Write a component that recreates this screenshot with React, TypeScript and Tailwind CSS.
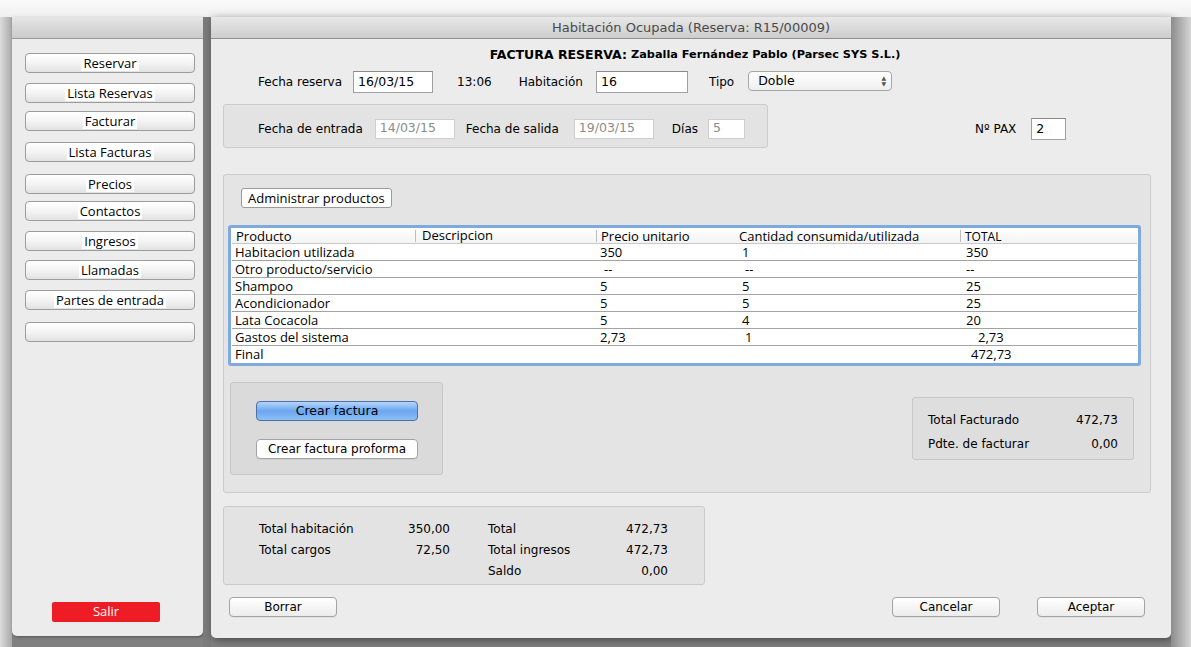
import React from 'react';

const mac = "font-['DejaVu_Sans',sans-serif] text-[12px] text-black";
const win = "font-['Open_Sans',sans-serif] text-[13px] text-black";

const sideButtons: { label: string; top: number }[] = [
    { label: 'Reservar', top: 14 },
    { label: 'Lista Reservas', top: 10 },
    { label: 'Facturar', top: 8 },
    { label: 'Lista Facturas', top: 11 },
    { label: 'Precios', top: 12 },
    { label: 'Contactos', top: 7 },
    { label: 'Ingresos', top: 10 },
    { label: 'Llamadas', top: 9 },
    { label: 'Partes de entrada', top: 10 },
    { label: '', top: 12 },
];

type Row = { p: string; pr: string; c: string; t: string; prOff?: number; cOff?: number; tOff?: number };

const rows: Row[] = [
    { p: 'Habitacion utilizada', pr: '350', c: '1', t: '350' },
    { p: 'Otro producto/servicio', pr: '--', c: '--', t: '--', prOff: 4, cOff: 3 },
    { p: 'Shampoo', pr: '5', c: '5', t: '25' },
    { p: 'Acondicionador', pr: '5', c: '5', t: '25' },
    { p: 'Lata Cocacola', pr: '5', c: '4', t: '20' },
    { p: 'Gastos del sistema', pr: '2,73', c: '1', t: '2,73', cOff: 3, tOff: 12 },
    { p: 'Final', pr: '', c: '', t: '472,73', tOff: 5 },
];

const MacButton = ({ label, className = '' }: { label: string; className?: string }) => (
    <button className={`h-[20px] rounded-[4px] border border-[#a3a3a3] bg-gradient-to-b from-white to-[#ececec] ${mac} shadow-[0_1px_0_rgba(0,0,0,0.05)] ${className}`}>
        {label}
    </button>
);

const Field = ({ value, w, h = 22, disabled = false }: { value: string; w: number; h?: number; disabled?: boolean }) => (
    <div
        className={`flex items-center px-[4px] bg-white border ${disabled ? 'border-[#cfcfcf] text-[#8c8c8c]' : 'border-[#9f9f9f] border-t-[#8a8a8a] text-black'} font-['DejaVu_Sans',sans-serif] text-[12.5px]`}
        style={{ width: w, height: h }}
    >
        {value}
    </div>
);

export default function App() {
    return (
        <div className="w-[1191px] h-[647px] overflow-hidden bg-[#808080] flex flex-col">
            {/* desktop strip */}
            <div className="h-[17px] shrink-0 bg-gradient-to-b from-[#fbfbfb] to-[#efefef]" />

            <div className="flex flex-1">
                <div className="w-[12px] shrink-0 bg-gradient-to-r from-[#dcdcdc] to-[#a9a9a9]" />

                {/* Side menu window */}
                <div className="w-[191px] h-[619px] shrink-0 flex flex-col bg-[#ececec] rounded-b-[5px] shadow-[1px_1px_3px_rgba(0,0,0,0.35)]">
                    <div className="h-[22px] shrink-0 bg-gradient-to-b from-[#e6e6e6] to-[#cbcbcb] border-b border-[#9a9a9a]" />
                    <div className="flex flex-col pl-[13px] pr-[8px]">
                        {sideButtons.map((b, i) => (
                            <button
                                key={i}
                                style={{ marginTop: b.top }}
                                className={`h-[20px] w-[170px] rounded-[4px] border border-[#9c9c9c] bg-gradient-to-b from-white via-[#f4f4f4] to-[#e2e2e2] ${win} text-[13.5px] flex items-center justify-center`}
                            >
                                {b.label && <span className="bg-white px-[2px] leading-[16px]">{b.label}</span>}
                            </button>
                        ))}
                    </div>
                    <div className="flex-1" />
                    <div className="flex pl-[40px] pb-[14px]">
                        <button className="h-[20px] w-[108px] rounded-[2px] bg-[#ee1c25] text-white font-['Open_Sans',sans-serif] text-[13px]">
                            Salir
                        </button>
                    </div>
                </div>

                <div className="w-[8px] shrink-0 bg-[#7b7b7b]" />

                {/* Main window */}
                <div className={`w-[960px] h-[621px] shrink-0 flex flex-col bg-[#ececec] rounded-b-[5px] shadow-[2px_2px_8px_rgba(0,0,0,0.45)] ${mac}`}>
                    <div className="h-[22px] shrink-0 bg-gradient-to-b from-[#e8e8e8] to-[#cdcdcd] border-b border-[#8f8f8f] flex items-center justify-center text-[13px] text-[#4a4a4a]">
                        Habitación Ocupada (Reserva: R15/00009)
                    </div>

                    <div className="mt-[8px] h-[16px] flex items-center justify-center font-bold pl-[8px]">
                        <span className="text-[12.5px]">FACTURA RESERVA:</span>
                        <span className="ml-[4px] text-[11.3px]">Zaballa Fernández Pablo (Parsec SYS S.L.)</span>
                    </div>

                    {/* Row 1 */}
                    <div className="mt-[8px] h-[22px] flex items-center pl-[47px]">
                        <span>Fecha reserva</span>
                        <div className="ml-[11px]"><Field value="16/03/15" w={80} /></div>
                        <span className="ml-[24px]">13:06</span>
                        <span className="ml-[27px]">Habitación</span>
                        <div className="ml-[13px]"><Field value="16" w={92} /></div>
                        <span className="ml-[21px]">Tipo</span>
                        <div className="ml-[14px] w-[144px] h-[20px] -mt-[2px] rounded-[4px] border border-[#a6a6a6] bg-gradient-to-b from-white to-[#efefef] flex items-center pl-[9px] pr-[5px]">
                            <span className="flex-1 text-[12.5px]">Doble</span>
                            <span className="flex flex-col text-[6px] leading-[6px] text-[#555]">
                                <span>▲</span>
                                <span>▼</span>
                            </span>
                        </div>
                    </div>

                    {/* Row 2 */}
                    <div className="mt-[11px] flex items-center pl-[12px]">
                        <div className="w-[545px] h-[44px] rounded-[3px] border border-[#cbcbcb] bg-[#e3e3e3] flex items-center pl-[34px] pt-[5px]">
                            <span>Fecha de entrada</span>
                            <div className="ml-[12px]"><Field value="14/03/15" w={80} h={20} disabled /></div>
                            <span className="ml-[11px]">Fecha de salida</span>
                            <div className="ml-[15px]"><Field value="19/03/15" w={80} h={20} disabled /></div>
                            <span className="ml-[18px]">Días</span>
                            <div className="ml-[10px]"><Field value="5" w={37} h={20} disabled /></div>
                        </div>
                        <div className="flex items-center mt-[6px]">
                            <span className="ml-[207px]">Nº PAX</span>
                            <div className="ml-[15px]"><Field value="2" w={35} /></div>
                        </div>
                    </div>

                    {/* Products group */}
                    <div className="mt-[26px] ml-[12px] w-[928px] h-[319px] rounded-[3px] border border-[#cbcbcb] bg-[#e4e4e4] flex flex-col">
                        <div className="mt-[13px] ml-[17px]">
                            <button className={`h-[20px] px-[6px] rounded-[3px] border border-[#9a9a9a] bg-white ${win}`}>
                                Administrar productos
                            </button>
                        </div>

                        {/* table */}
                        <div className={`mt-[17px] ml-[4px] w-[913px] h-[141px] rounded-[3px] border-[3px] border-[#7faadd] bg-white ${win} flex flex-col px-[1px] pt-[1px]`}>
                            <div className="h-[15px] flex items-center border-b border-[#c8c8c8] bg-gradient-to-b from-white to-[#f3f3f3] leading-[13px]">
                                <span className="w-[183px] pl-[4px] pt-[1px]">Producto</span>
                                <span className="w-px h-[12px] bg-[#bdbdbd]" />
                                <span className="w-[180px] pl-[6px] -mt-[1px]">Descripcion</span>
                                <span className="w-px h-[12px] bg-[#bdbdbd]" />
                                <span className="w-[139px] pl-[4px]">Precio unitario</span>
                                <span className="w-[224px] pl-[3px]">Cantidad consumida/utilizada</span>
                                <span className="w-px h-[12px] bg-[#bdbdbd]" />
                                <span className="pl-[4px] text-[12px]">TOTAL</span>
                            </div>
                            {rows.map((r, i) => (
                                <div
                                    key={i}
                                    className={`h-[17px] flex items-center leading-[15px] ${i < rows.length - 1 ? 'border-b border-[#a3a3a3]' : ''}`}
                                >
                                    <span className="w-[364px] pl-[3px]">{r.p}</span>
                                    <span className="w-[139px]" style={{ paddingLeft: 4 + (r.prOff ?? 0) }}>{r.pr}</span>
                                    <span className="w-[225px]" style={{ paddingLeft: 7 + (r.cOff ?? 0) }}>{r.c}</span>
                                    <span style={{ paddingLeft: 6 + (r.tOff ?? 0) }}>{r.t}</span>
                                </div>
                            ))}
                        </div>

                        <div className="mt-[16px] flex">
                            <div className="ml-[6px] w-[213px] h-[93px] rounded-[3px] border border-[#c6c6c6] bg-[#dadada] flex flex-col items-center pl-[1px] pt-[18px] gap-[18px]">
                                <button className="w-[162px] h-[20px] rounded-[4px] border border-[#4f70a6] bg-gradient-to-b from-[#b5d5fb] via-[#6aa6ef] to-[#8cc0f5] text-[12.5px]">
                                    Crear factura
                                </button>
                                <MacButton label="Crear factura proforma" className="w-[162px] text-[12.5px] !bg-none bg-white" />
                            </div>
                            <div className="ml-[469px] mt-[15px] w-[222px] h-[63px] rounded-[3px] border border-[#c6c6c6] bg-[#dedede] flex flex-col pt-[14px] gap-[8px] pl-[15px] pr-[15px]">
                                <div className="h-[16px] flex items-center justify-between"><span>Total Facturado</span><span>472,73</span></div>
                                <div className="h-[16px] flex items-center justify-between"><span>Pdte. de facturar</span><span>0,00</span></div>
                            </div>
                        </div>
                    </div>

                    {/* Totals */}
                    <div className="mt-[13px] ml-[12px] w-[482px] h-[79px] rounded-[3px] border border-[#cbcbcb] bg-[#e3e3e3] grid grid-cols-[35px_105px_86px_128px_90px] grid-rows-[21px_21px_21px] content-start pt-[13px]">
                        <span />
                        <span>Total habitación</span>
                        <span className="text-right">350,00</span>
                        <span className="pl-[38px] whitespace-nowrap">Total</span>
                        <span className="text-right">472,73</span>
                        <span />
                        <span>Total cargos</span>
                        <span className="text-right">72,50</span>
                        <span className="pl-[38px] whitespace-nowrap">Total ingresos</span>
                        <span className="text-right">472,73</span>
                        <span />
                        <span />
                        <span />
                        <span className="pl-[38px]">Saldo</span>
                        <span className="text-right">0,00</span>
                    </div>

                    {/* Footer buttons */}
                    <div className="mt-[12px] flex pl-[18px] pr-[26px]">
                        <MacButton label="Borrar" className="w-[108px]" />
                        <div className="flex-1" />
                        <MacButton label="Cancelar" className="w-[108px]" />
                        <MacButton label="Aceptar" className="w-[108px] ml-[37px]" />
                    </div>
                </div>

                <div className="flex-1 bg-gradient-to-r from-[#8c8c8c] to-[#d6d6d6]" />
            </div>
        </div>
    );
}
